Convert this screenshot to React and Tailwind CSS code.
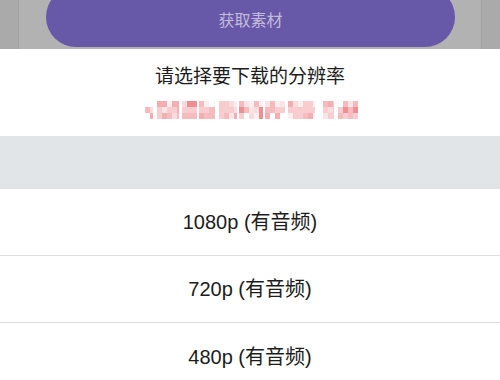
import React from "react";

const segs = [
  [144, 152], [156, 178], [181, 196], [198, 214], [218, 236], [238, 262],
  [264, 284], [287, 314], [322, 333], [337, 357],
];
const shades = ["#ffffff", "#fdeeef", "#fadcde", "#f8cdd0", "#f5bcc0", "#f3aeb3", "#fbe4e5"];

function Mosaic() {
  const rects = [];
  let k = 11;
  segs.forEach(([a, b], si) => {
    for (let x = a; x < b; x += 5) {
      for (let r = 0; r < 3; r++) {
        k = (k * 1103515245 + 12345) % 2147483648;
        let v = (k >> 8) % shades.length;
        if (r === 1 && v < 2) v = 3;
        const hot = si === 9 || si === 2 || si === 5;
        const col = hot && v === 5 ? "#ee8f95" : shades[v];
        rects.push(
          <rect key={`${x}-${r}`} x={x - 144} y={r * 6} width={Math.min(5, b - x)} height={6} fill={col} />
        );
      }
    }
  });
  return (
    <svg width="214" height="18" viewBox="0 0 214 18" className="block">
      {rects}
    </svg>
  );
}

function Row({ label, last }) {
  return (
    <div className={`h-[67px] flex items-center justify-center text-[20px] text-[#1c1c1c] ${last ? "" : "border-b border-[#dedede]"}`}>
      {label}
    </div>
  );
}

export default function App() {
  return (
    <div
      className="w-[500px] h-[380px] overflow-hidden bg-white"
      style={{ fontFamily: '"Liberation Sans", "Noto Sans CJK SC", sans-serif' }}
    >
      <div className="h-[49px] flex bg-[#b2b2b2] overflow-hidden">
        <div className="w-[19px] bg-[#aaaaaa] border-r border-[#a2a2a2]" />
        <div className="flex-1 pl-[27px] pr-[26px]">
          <div className="-mt-[13px] h-[60px] rounded-full bg-[#6858a8] flex items-center justify-center pt-[8px] text-[16px] text-[#c4bcdc]">
            获取素材
          </div>
        </div>
        <div className="w-[19px] bg-[#aaaaaa] border-l border-[#a2a2a2]" />
      </div>
      <div className="h-[87px] flex flex-col items-center pt-[15px]">
        <div className="text-[19px] leading-[26px] text-[#1c1c1c]">请选择要下载的分辨率</div>
        <div className="mt-[11px] pl-[4px]">
          <Mosaic />
        </div>
      </div>
      <div className="h-[53px] bg-[#e2e5e8]" />
      <Row label="1080p (有音频)" />
      <Row label="720p (有音频)" />
      <Row label="480p (有音频)" last />
    </div>
  );
}
